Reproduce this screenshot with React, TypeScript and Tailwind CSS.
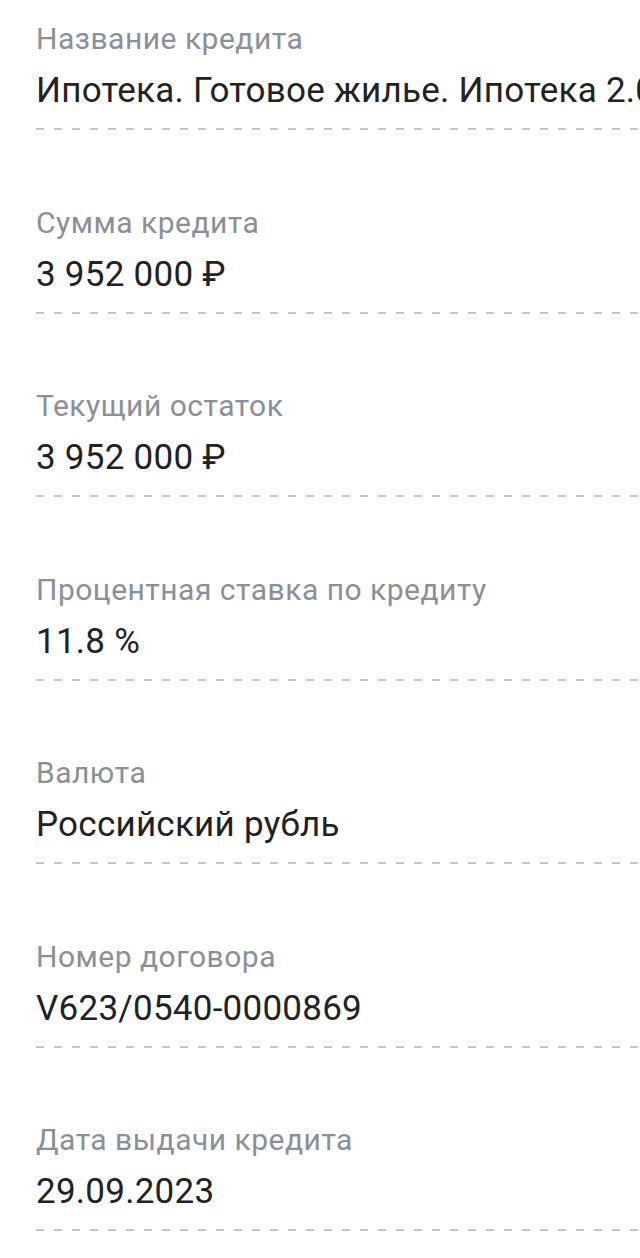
import React from "react";

const fields = [
  { label: "Название кредита", value: "Ипотека. Готовое жилье. Ипотека 2.0" },
  { label: "Сумма кредита", value: "3 952 000 ₽" },
  { label: "Текущий остаток", value: "3 952 000 ₽" },
  { label: "Процентная ставка по кредиту", value: "11.8 %" },
  { label: "Валюта", value: "Российский рубль" },
  { label: "Номер договора", value: "V623/0540-0000869" },
  { label: "Дата выдачи кредита", value: "29.09.2023" },
];

export default function App() {
  return (
    <div className="w-[640px] h-[1258px] overflow-hidden bg-white font-['Roboto',sans-serif]">
      <div className="flex flex-col pl-9 pt-[19px]">
        {fields.map((f) => (
          <div key={f.label} className="h-[183.5px] shrink-0 flex flex-col">
            <div className="text-[30px] leading-[40px] tracking-[0.5px] text-[#8a9099] whitespace-nowrap">
              {f.label}
            </div>
            <div className="mt-[12px] text-[35px] leading-[40px] tracking-[0.25px] text-[#222222] whitespace-nowrap">
              {f.value}
            </div>
            <div className="mt-[17px] h-[2px] w-[640px] shrink-0 bg-[repeating-linear-gradient(to_right,#c6c6c6_0_8px,transparent_8px_18px)]" />
          </div>
        ))}
      </div>
    </div>
  );
}
